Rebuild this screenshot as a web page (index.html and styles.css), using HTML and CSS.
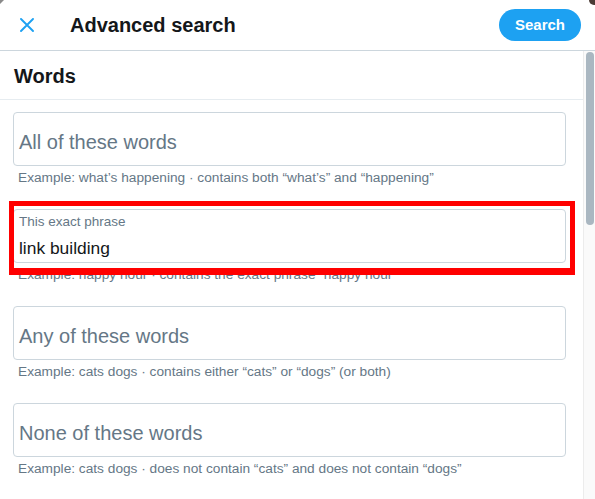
FILE: index.html
```html
<!DOCTYPE html>
<html lang="en">
<head>
<meta charset="utf-8">
<title>Advanced search</title>
<link rel="stylesheet" href="styles.css">
</head>
<body>
<div class="page">
  <header class="header">
    <button class="close" aria-label="Close">
      <svg viewBox="0 0 14 14" width="14" height="14"><path d="M1 1 L13 13 M13 1 L1 13" stroke="#1da1f2" stroke-width="1.9" stroke-linecap="round" fill="none"/></svg>
    </button>
    <h1 class="title">Advanced search</h1>
    <button class="search-btn">Search</button>
  </header>
  <div class="body">
    <main class="content">
      <h2 class="section-title">Words</h2>
      <div class="fields">
        <div class="field">
          <div class="box"><span class="placeholder">All of these words</span></div>
          <div class="hint">Example: what’s happening · contains both “what’s” and “happening”</div>
        </div>
        <div class="field">
          <div class="box filled">
            <span class="label">This exact phrase</span>
            <span class="value">link building</span>
          </div>
          <div class="hint">Example: happy hour · contains the exact phrase “happy hour”</div>
        </div>
        <div class="field">
          <div class="box"><span class="placeholder">Any of these words</span></div>
          <div class="hint">Example: cats dogs · contains either “cats” or “dogs” (or both)</div>
        </div>
        <div class="field">
          <div class="box"><span class="placeholder">None of these words</span></div>
          <div class="hint">Example: cats dogs · does not contain “cats” and does not contain “dogs”</div>
        </div>
      </div>
    </main>
    <div class="scrollbar"><div class="thumb"></div></div>
  </div>
  <div class="highlight"></div>
  <div class="corner-tl"></div>
  <div class="corner-tr"></div>
</div>
</body>
</html>
```

FILE: styles.css
```css
* { box-sizing: border-box; }

html, body {
  margin: 0;
  padding: 0;
  background: #ffffff;
}

body {
  font-family: "Liberation Sans", Arial, sans-serif;
  color: #14171a;
  width: 595px;
  height: 499px;
  overflow: hidden;
}

.page {
  position: relative;
  width: 595px;
  height: 499px;
  display: flex;
  flex-direction: column;
}

.header {
  height: 51px;
  flex: 0 0 51px;
  display: flex;
  align-items: center;
  border-bottom: 1px solid #ccd6dd;
  padding-bottom: 1px;
}

.close {
  margin-left: 20px;
  width: 14px;
  height: 14px;
  padding: 0;
  border: 0;
  background: none;
  display: flex;
}

.title {
  margin: 0 0 0 36px;
  font-size: 20px;
  font-weight: 700;
  line-height: 24px;
  color: #14171a;
  flex: 1;
}

.search-btn {
  margin-right: 14px;
  height: 32px;
  padding: 0 16px;
  border: 0;
  border-radius: 16px;
  background: #1da1f2;
  color: #ffffff;
  font-family: "Liberation Sans", Arial, sans-serif;
  font-size: 15px;
  font-weight: 700;
}

.body {
  flex: 1;
  display: flex;
  min-height: 0;
}

.content {
  flex: 1;
  min-width: 0;
}

.section-title {
  margin: 0;
  height: 49px;
  padding: 13px 0 0 14px;
  font-size: 20px;
  font-weight: 700;
  line-height: 24px;
  color: #14171a;
  border-bottom: 1px solid #e6ecf0;
}

.fields {
  padding: 12px 17px 0 13px;
  display: flex;
  flex-direction: column;
  gap: 23px;
}

.box {
  height: 54px;
  border: 1px solid #ccd6dd;
  border-radius: 4px;
  padding: 17px 5px 0;
  display: flex;
  flex-direction: column;
}

.placeholder {
  font-size: 20px;
  line-height: 24px;
  color: #657786;
}

.box.filled {
  padding-top: 4px;
}

.label {
  font-size: 13.5px;
  line-height: 16px;
  color: #657786;
}

.value {
  margin-top: 6px;
  font-size: 17.4px;
  line-height: 24px;
  color: #14171a;
}

.hint {
  margin-top: 4px;
  padding-left: 5px;
  font-size: 13.7px;
  line-height: 16px;
  color: #657786;
  white-space: nowrap;
}

.scrollbar {
  flex: 0 0 12px;
  background: #fafafa;
  border-left: 1px solid #ececec;
  padding: 1px 1px 0 2px;
}

.thumb {
  width: 8px;
  height: 173px;
  border-radius: 4px;
  background: #aab7c1;
}

.highlight {
  position: absolute;
  left: 9px;
  top: 201px;
  width: 566px;
  height: 74px;
  border: 5px solid #ff0000;
  border-bottom-width: 7px;
  pointer-events: none;
}

.corner-tl {
  position: absolute;
  left: 0;
  top: 0;
  width: 0;
  height: 0;
  border-top: 4px solid #8a8a8a;
  border-right: 4px solid transparent;
}

.corner-tr {
  position: absolute;
  right: 0;
  top: 0;
  width: 6px;
  height: 5px;
  border-bottom-left-radius: 6px;
  background: #4a3a34;
}
```
